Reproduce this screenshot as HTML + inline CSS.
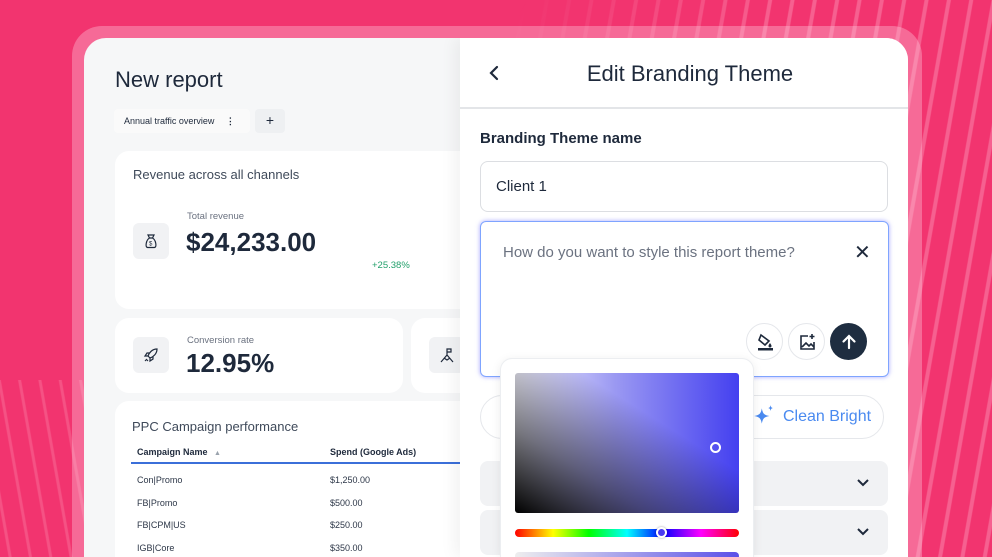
<!DOCTYPE html>
<html><head><style>
*{margin:0;padding:0;box-sizing:border-box}
html,body{width:992px;height:557px;overflow:hidden}
body{position:relative;font-family:"Liberation Sans",sans-serif;color:#1e293b;background:#f2346f;}
.stripes{position:absolute;inset:0;background:
repeating-linear-gradient(100deg,rgba(255,255,255,0) 0 8px,rgba(255,180,205,.35) 9px 12px,rgba(255,255,255,0) 13px 22px);
-webkit-mask-image:linear-gradient(120deg,transparent 40%,#000 60%);}
.stripes2{position:absolute;left:0;top:380px;width:85px;height:177px;background:repeating-linear-gradient(80deg,rgba(255,255,255,0) 0 8px,rgba(255,170,195,.25) 9px 11px,rgba(255,255,255,0) 12px 20px);}
.frame{position:absolute;left:72px;top:26px;width:850px;height:531px;border-radius:30px 30px 0 0;background:rgba(255,210,225,.35)}
.card{position:absolute;left:84px;top:38px;width:824px;height:519px;border-radius:22px 22px 0 0;overflow:hidden;background:#f6f7f8}
.left{position:absolute;left:0;top:0;width:376px;height:100%}
.right{position:absolute;left:376px;top:0;width:448px;height:100%;background:#fff;box-shadow:-6px 0 14px rgba(0,0,0,.05)}
.abs{position:absolute}
.box{position:absolute;background:#fff;border-radius:14px}
.ic{position:absolute;width:36px;height:36px;border-radius:6px;background:#f1f2f4;display:flex;align-items:center;justify-content:center}
</style></head><body>
<div class="stripes"></div><div class="stripes2"></div>
<div class="frame"></div>
<div class="card">
 <div class="left">
  <div class="abs" style="left:31px;top:29px;font-size:22px;color:#1e293b">New report</div>
  <div class="abs" style="left:30px;top:71px;width:136px;height:24px;background:#fafafa;border-radius:4px;font-size:9px;padding:7px 10px;color:#1e293b">Annual traffic overview <span style="margin-left:9px;font-weight:bold">⋮</span></div>
  <div class="abs" style="left:171px;top:71px;width:30px;height:24px;background:#eef0f2;border-radius:4px;text-align:center;font-size:14px;line-height:23px">+</div>
  <div class="box" style="left:31px;top:113px;width:360px;height:158px">
   <div class="abs" style="left:18px;top:16px;font-size:13px;color:#3f4a5a">Revenue across all channels</div>
   <div class="ic" style="left:18px;top:72px"><svg width="14" height="16" viewBox="0 0 14 16" fill="none" stroke="#1e293b" stroke-width="1.2"><path d="M4 2h6L8.5 5h-3zM5.5 5C2 7 1 14 3.5 14.5h7C13 14 12 7 8.5 5"/><text x="5" y="12.5" font-size="6" fill="#1e293b" stroke="none">$</text></svg></div>
   <div class="abs" style="left:72px;top:60px;font-size:9.5px;color:#6b7280">Total revenue</div>
   <div class="abs" style="left:71px;top:76px;font-size:26px;font-weight:bold;color:#1e293b">$24,233.00</div>
   <div class="abs" style="left:257px;top:109px;font-size:9.5px;color:#22a06b">+25.38%</div>
  </div>
  <div class="box" style="left:31px;top:280px;width:288px;height:75px">
   <div class="ic" style="left:18px;top:19px"><svg width="16" height="16" viewBox="0 0 16 16" fill="none" stroke="#1e293b" stroke-width="1.2"><path d="M14 2C9 2 6 6 5 9l2 2c3-1 7-4 7-9zM5 9L2 9l2-3h3M7 11v3l3-2V9M4 12l-2 2M5 13l-1 1"/></svg></div>
   <div class="abs" style="left:72px;top:17px;font-size:9.5px;color:#6b7280">Conversion rate</div>
   <div class="abs" style="left:71px;top:30px;font-size:26px;font-weight:bold">12.95%</div>
  </div>
  <div class="box" style="left:327px;top:280px;width:100px;height:75px">
   <div class="ic" style="left:18px;top:19px"><svg width="16" height="16" viewBox="0 0 16 16" fill="none" stroke="#1e293b" stroke-width="1.2"><path d="M8 8V2h4v3H8M8 8l-6 7M8 8l6 7M5 11l3 2 3-2"/></svg></div>
  </div>
  <div class="box" style="left:31px;top:363px;width:400px;height:170px">
   <div class="abs" style="left:17px;top:18px;font-size:13px;color:#3f4a5a">PPC Campaign performance</div>
   <div class="abs" style="left:22px;top:46px;font-size:9px;font-weight:bold">Campaign Name <span style="color:#9aa3ad;margin-left:4px;font-size:7px">▲</span></div>
   <div class="abs" style="left:215px;top:46px;font-size:9px;font-weight:bold">Spend (Google Ads)</div>
   <div class="abs" style="left:16px;top:61px;width:400px;height:2px;background:#3b6fd9"></div>
   <div class="abs" style="left:22px;top:68px;font-size:9px;line-height:22.7px;color:#2d3748">Con|Promo<br>FB|Promo<br>FB|CPM|US<br>IGB|Core</div>
   <div class="abs" style="left:215px;top:68px;font-size:9px;line-height:22.7px;color:#2d3748">$1,250.00<br>$500.00<br>$250.00<br>$350.00</div>
  </div>
 </div>
 <div class="right">
  <svg class="abs" style="left:28px;top:27px" width="12" height="16" viewBox="0 0 12 16" fill="none" stroke="#1e293b" stroke-width="2.2" stroke-linecap="round"><path d="M9 2L3 8l6 6"/></svg>
  <div class="abs" style="left:0;width:460px;top:23px;text-align:center;font-size:22px;color:#1e293b">Edit Branding Theme</div>
  <div class="abs" style="left:0;top:69px;width:448px;height:2px;background:#e3e5e8"></div>
  <div class="abs" style="left:20px;top:92px;font-size:15px;font-weight:bold;color:#1e293b">Branding Theme name</div>
  <div class="abs" style="left:20px;top:123px;width:408px;height:51px;border:1.5px solid #dcdee2;border-radius:8px;font-size:15px;padding:16px 15px">Client 1</div>
  <div class="abs" style="left:20px;top:183px;width:409px;height:156px;border:1.5px solid #7fa4ff;border-radius:6px;box-shadow:0 0 5px rgba(110,110,255,.6)">
   <div class="abs" style="left:22px;top:22px;font-size:15px;color:#6b7280">How do you want to style this report theme?</div>
   <div class="abs" style="left:373px;top:18px;font-size:20px;color:#1e293b">✕</div>
   <div class="abs" style="left:265px;top:101px;width:37px;height:37px;border-radius:50%;border:1px solid #e5e7eb;display:flex;align-items:center;justify-content:center"><svg width="18" height="18" viewBox="0 0 18 18" fill="#1e293b"><path d="M5 2l8 6-4 4-6-5z" fill="none" stroke="#1e293b" stroke-width="1.6"/><path d="M14 10c1 1.5 1.5 2 1.5 3a1.5 1.5 0 01-3 0c0-1 .5-1.5 1.5-3z"/><rect x="2" y="15" width="15" height="2.5"/></svg></div>
   <div class="abs" style="left:307px;top:101px;width:37px;height:37px;border-radius:50%;border:1px solid #e5e7eb;display:flex;align-items:center;justify-content:center"><svg width="18" height="18" viewBox="0 0 18 18" fill="none" stroke="#1e293b" stroke-width="1.6"><path d="M10 3H3v13h13V9M4 14l4-4 3 3 2-2 3 3M14 1v5M11.5 3.5h5"/></svg></div>
   <div class="abs" style="left:349px;top:101px;width:37px;height:37px;border-radius:50%;background:#1e2d40;display:flex;align-items:center;justify-content:center"><svg width="18" height="18" viewBox="0 0 18 18" fill="none" stroke="#fff" stroke-width="2.2" stroke-linecap="round"><path d="M9 15V3M3.5 8.5L9 3l5.5 5.5"/></svg></div>
  </div>
  <div class="abs" style="left:20px;top:357px;width:60px;height:44px;border:1.5px solid #e5e7eb;border-radius:22px"></div>
  <div class="abs" style="left:260px;top:357px;width:164px;height:44px;border:1.5px solid #e5e7eb;border-radius:22px;font-size:16px;color:#4a8af0;padding:12px 0 0 62px">Clean Bright</div>
  <svg class="abs" style="left:292px;top:366px" width="24" height="24" viewBox="0 0 22 22" fill="#4a8af0"><path d="M9 4c1 5 2 6 7 7-5 1-6 2-7 7-1-5-2-6-7-7 5-1 6-2 7-7zM17 1c.4 2 .8 2.4 2.5 2.7-1.7.3-2.1.7-2.5 2.7-.4-2-.8-2.4-2.5-2.7 1.7-.3 2.1-.7 2.5-2.7z"/></svg>
  <div class="abs" style="left:20px;top:423px;width:408px;height:45px;background:#f1f2f4;border-radius:8px"></div>
  <div class="abs" style="left:20px;top:472px;width:408px;height:45px;background:#f1f2f4;border-radius:8px"></div>
  <svg class="abs" style="left:396px;top:440px" width="14" height="10" viewBox="0 0 14 10" fill="none" stroke="#1e293b" stroke-width="2"><path d="M2 2l5 5 5-5"/></svg>
  <svg class="abs" style="left:396px;top:489px" width="14" height="10" viewBox="0 0 14 10" fill="none" stroke="#1e293b" stroke-width="2"><path d="M2 2l5 5 5-5"/></svg>
 </div>
</div>
<div class="abs" style="left:500px;top:358px;width:254px;height:199px;background:#fff;border-radius:12px 12px 0 0;border:1px solid #eceef1;border-bottom:none;box-shadow:0 2px 10px rgba(0,0,0,.08);overflow:hidden">
 <div class="abs" style="left:14px;top:14px;width:224px;height:140px;border-radius:3px;background:linear-gradient(to top right,#000 0%,rgba(0,0,0,.5) 30%,rgba(0,0,0,0) 65%),linear-gradient(to right,#f4f4ff,#9a98f2 45%,#4440f0)"></div>
 <div class="abs" style="left:209px;top:83px;width:11px;height:11px;border-radius:50%;border:2px solid #fff"></div>
 <div class="abs" style="left:14px;top:170px;width:224px;height:8px;border-radius:4px;background:linear-gradient(to right,#f00,#ff0 17%,#0f0 33%,#0ff 50%,#00f 66%,#f0f 83%,#f00)"></div>
 <div class="abs" style="left:155px;top:168px;width:11px;height:11px;border-radius:50%;border:2px solid #fff;background:#4a3af0;box-shadow:0 0 2px rgba(0,0,0,.4)"></div>
 <div class="abs" style="left:14px;top:193px;width:224px;height:8px;border-radius:4px;background:linear-gradient(to right,#eee,#5b50e8)"></div>
</div>
</body></html>
